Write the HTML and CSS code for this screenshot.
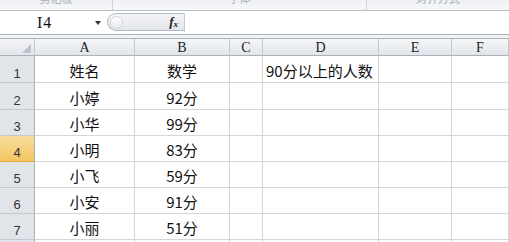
FILE: index.html
```html
<!DOCTYPE html>
<html lang="zh-CN">
<head>
    <meta charset="UTF-8">
    <title>成绩表</title>
    <link rel="stylesheet" href="styles.css">
</head>
<body>
    <!-- ribbon bottom edge, cut off at the top -->
    <div class="ribbon">
        <span class="ribbon-group g1"><span class="ribbon-label">剪贴板</span></span>
        <span class="ribbon-group g2"><span class="ribbon-label">字体</span></span>
        <span class="ribbon-group g3"><span class="ribbon-label">对齐方式</span></span>
    </div>

    <!-- formula bar -->
    <div class="formula-bar">
        <div class="name-box">
            <span class="cell-ref">I4</span>
            <span class="drop-arrow"></span>
        </div>
        <div class="fx-pill">
            <span class="pill-knob"></span>
            <span class="fx">f<sub>x</sub></span>
        </div>
        <div class="formula-input"></div>
    </div>

    <div class="gap-strip"></div>

    <!-- sheet -->
    <div class="sheet">
        <div class="corner"><span class="corner-tri"></span></div>
        <div class="ch">A</div>
        <div class="ch">B</div>
        <div class="ch">C</div>
        <div class="ch">D</div>
        <div class="ch">E</div>
        <div class="ch">F</div>

        <div class="rh">1</div>
        <div class="cell center">姓名</div>
        <div class="cell center">数学</div>
        <div class="cell"></div>
        <div class="cell left">90分以上的人数</div>
        <div class="cell"></div>
        <div class="cell"></div>

        <div class="rh">2</div>
        <div class="cell center">小婷</div>
        <div class="cell center">92分</div>
        <div class="cell"></div>
        <div class="cell"></div>
        <div class="cell"></div>
        <div class="cell"></div>

        <div class="rh">3</div>
        <div class="cell center">小华</div>
        <div class="cell center">99分</div>
        <div class="cell"></div>
        <div class="cell"></div>
        <div class="cell"></div>
        <div class="cell"></div>

        <div class="rh active">4</div>
        <div class="cell center">小明</div>
        <div class="cell center">83分</div>
        <div class="cell"></div>
        <div class="cell"></div>
        <div class="cell"></div>
        <div class="cell"></div>

        <div class="rh">5</div>
        <div class="cell center">小飞</div>
        <div class="cell center">59分</div>
        <div class="cell"></div>
        <div class="cell"></div>
        <div class="cell"></div>
        <div class="cell"></div>

        <div class="rh">6</div>
        <div class="cell center">小安</div>
        <div class="cell center">91分</div>
        <div class="cell"></div>
        <div class="cell"></div>
        <div class="cell"></div>
        <div class="cell"></div>

        <div class="rh">7</div>
        <div class="cell center">小丽</div>
        <div class="cell center">51分</div>
        <div class="cell"></div>
        <div class="cell"></div>
        <div class="cell"></div>
        <div class="cell"></div>

        <!-- next row, only its top edge is in view -->
        <div class="rh"></div>
        <div class="cell"></div>
        <div class="cell"></div>
        <div class="cell"></div>
        <div class="cell"></div>
        <div class="cell"></div>
        <div class="cell"></div>
    </div>
</body>
</html>
```

FILE: styles.css
```css
/* Colours */
:root {
    --grid-line: #d6d6d6;
    --head-line: #c3c8cf;
    --head-bg: #e1e5ea;
    --frame-line: #a9b1bb;
    --text-color: #111;
}

body {
    margin: 0;
    width: 509px;
    height: 242px;
    overflow: hidden;
    background: #fff;
    color: var(--text-color);
    font-family: "Noto Sans CJK SC", "Liberation Sans", sans-serif;
}

/* Ribbon */
.ribbon {
    height: 10px;
    background: linear-gradient(#eef0f3, #f7f8f9);
    border-bottom: 1px solid #b7bdc5;
    display: flex;
    overflow: hidden;
}

.ribbon-group {
    height: 10px;
    overflow: hidden;
    border-right: 1px solid #d0d4da;
    display: flex;
    justify-content: center;
}

.g1 { width: 112px; }
.g2 { width: 253px; }
.g3 { flex: 1; border-right: none; }

.ribbon-label {
    font-size: 11px;
    line-height: 11px;
    color: #aab0b8;
    margin-top: -7px;
}

/* Formula bar */
.formula-bar {
    height: 21px;
    padding-top: 2px;
    background: #fff;
    border-bottom: 1px solid var(--frame-line);
    display: flex;
}

.name-box {
    width: 107px;
    height: 19px;
    display: flex;
    align-items: center;
    position: relative;
}

.cell-ref {
    padding-left: 37px;
    font-family: "Liberation Serif", serif;
    font-size: 16px;
    letter-spacing: 1px;
    color: #111;
}

.drop-arrow {
    position: absolute;
    left: 95px;
    top: 8px;
    width: 0;
    height: 0;
    border-left: 3px solid transparent;
    border-right: 3px solid transparent;
    border-top: 4px solid #333;
}

.fx-pill {
    width: 77px;
    height: 18px;
    box-sizing: border-box;
    border: 1px solid #b4bbc4;
    border-right: none;
    border-radius: 10px 0 0 10px;
    background: linear-gradient(#f3f4f6, #e3e6ea);
    display: flex;
    align-items: center;
    justify-content: space-between;
    padding: 0 6px 0 2px;
}

.pill-knob {
    width: 11px;
    height: 11px;
    border-radius: 50%;
    border: 1px solid #d3d7dc;
    background: linear-gradient(#fdfdfd, #e8ebee);
}

.fx {
    font-family: "Liberation Serif", serif;
    font-style: italic;
    font-weight: bold;
    font-size: 13px;
    color: #222;
}

.fx sub {
    font-size: 9px;
    vertical-align: -1px;
}

.formula-input {
    flex: 1;
    height: 19px;
    box-sizing: border-box;
    border-left: 1px solid #c4cad1;
    background: #fff;
}

.gap-strip {
    height: 3px;
    background: #f2f3f5;
}

/* Sheet */
.sheet {
    display: grid;
    grid-template-columns: 35px 100px 95px 33px 116px 73px 57px;
    grid-template-rows: 17px 27px 27px 26px 26px 26px 26px 26px 4px;
    border-top: 1px solid var(--frame-line);
}

.corner,
.ch,
.rh,
.cell {
    box-sizing: border-box;
}

.corner {
    background: linear-gradient(#f3f4f6, #e2e5ea);
    border-right: 1px solid var(--head-line);
    border-bottom: 1px solid var(--frame-line);
    display: flex;
    justify-content: flex-end;
    align-items: flex-end;
    padding: 0 3px 2px 0;
}

.corner-tri {
    width: 0;
    height: 0;
    border-left: 9px solid transparent;
    border-bottom: 9px solid #bcc2ca;
}

.ch {
    background: linear-gradient(#f5f6f8, #e1e5ea);
    border-right: 1px solid var(--head-line);
    border-bottom: 1px solid var(--frame-line);
    font-family: "Liberation Serif", serif;
    font-size: 14px;
    line-height: 17px;
    text-align: center;
    color: #222;
}

.rh {
    background: var(--head-bg);
    border-right: 1px solid var(--frame-line);
    border-bottom: 1px solid var(--head-line);
    font-family: "Liberation Sans", sans-serif;
    font-size: 13px;
    display: flex;
    justify-content: center;
    align-items: flex-end;
    padding-bottom: 1px;
    color: #333;
}

.rh.active {
    background: linear-gradient(#f9dd9f, #f2c65f);
    border-bottom-color: #e2a83a;
}

.cell {
    border-right: 1px solid var(--grid-line);
    border-bottom: 1px solid var(--grid-line);
    font-size: 15px;
    display: flex;
    align-items: center;
    padding-top: 2px;
    white-space: nowrap;
}

.cell.center {
    justify-content: center;
}

.cell.left {
    padding-left: 3px;
}
```
